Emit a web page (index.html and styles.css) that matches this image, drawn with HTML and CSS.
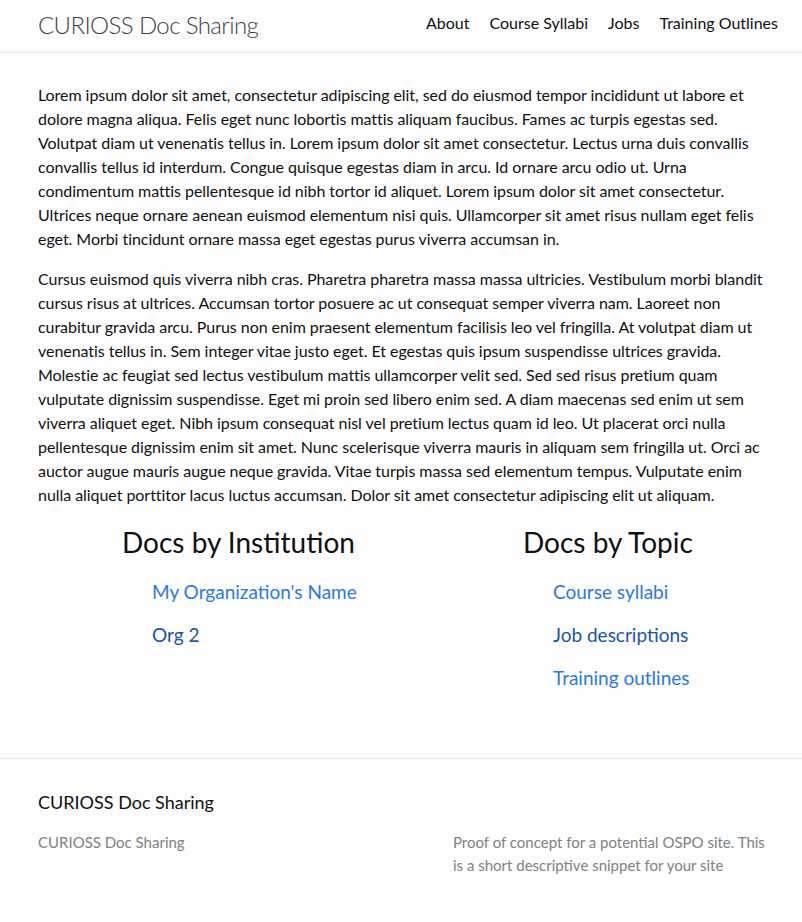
FILE: index.html
```html
<!DOCTYPE html>
<html lang="en">
<head>
<meta charset="utf-8">
<title>CURIOSS Doc Sharing</title>
<link rel="stylesheet" href="styles.css">
</head>
<body>
<header class="site-header">
  <div class="wrapper header-inner">
    <a class="site-title" href="#">CURIOSS Doc Sharing</a>
    <nav class="site-nav">
      <a class="nav-link" href="#">About</a>
      <a class="nav-link" href="#">Course Syllabi</a>
      <a class="nav-link" href="#">Jobs</a>
      <a class="nav-link" href="#">Training Outlines</a>
    </nav>
  </div>
</header>

<main class="page-content">
  <div class="wrapper">
    <p class="para">Lorem ipsum dolor sit amet, consectetur adipiscing elit, sed do eiusmod tempor incididunt ut labore et dolore magna aliqua. Felis eget nunc lobortis mattis aliquam faucibus. Fames ac turpis egestas sed. Volutpat diam ut venenatis tellus in. Lorem ipsum dolor sit amet consectetur. Lectus urna duis convallis convallis tellus id interdum. Congue quisque egestas diam in arcu. Id ornare arcu odio ut. Urna condimentum mattis pellentesque id nibh tortor id aliquet. Lorem ipsum dolor sit amet consectetur. Ultrices neque ornare aenean euismod elementum nisi quis. Ullamcorper sit amet risus nullam eget felis eget. Morbi tincidunt ornare massa eget egestas purus viverra accumsan in.</p>
    <p class="para">Cursus euismod quis viverra nibh cras. Pharetra pharetra massa massa ultricies. Vestibulum morbi blandit cursus risus at ultrices. Accumsan tortor posuere ac ut consequat semper viverra nam. Laoreet non curabitur gravida arcu. Purus non enim praesent elementum facilisis leo vel fringilla. At volutpat diam ut venenatis tellus in. Sem integer vitae justo eget. Et egestas quis ipsum suspendisse ultrices gravida. Molestie ac feugiat sed lectus vestibulum mattis ullamcorper velit sed. Sed sed risus pretium quam vulputate dignissim suspendisse. Eget mi proin sed libero enim sed. A diam maecenas sed enim ut sem viverra aliquet eget. Nibh ipsum consequat nisl vel pretium lectus quam id leo. Ut placerat orci nulla pellentesque dignissim enim sit amet. Nunc scelerisque viverra mauris in aliquam sem fringilla ut. Orci ac auctor augue mauris augue neque gravida. Vitae turpis massa sed elementum tempus. Vulputate enim nulla aliquet porttitor lacus luctus accumsan. Dolor sit amet consectetur adipiscing elit ut aliquam.</p>
  </div>

  <section class="docs">
    <div class="docs-col">
      <h2 class="docs-title">Docs by Institution</h2>
      <ul class="docs-list">
        <li class="docs-item"><a class="doc-link" href="#">My Organization's Name</a></li>
        <li class="docs-item"><a class="doc-link visited" href="#">Org 2</a></li>
      </ul>
    </div>
    <div class="docs-col">
      <h2 class="docs-title">Docs by Topic</h2>
      <ul class="docs-list">
        <li class="docs-item"><a class="doc-link" href="#">Course syllabi</a></li>
        <li class="docs-item"><a class="doc-link visited" href="#">Job descriptions</a></li>
        <li class="docs-item"><a class="doc-link" href="#">Training outlines</a></li>
      </ul>
    </div>
  </section>
</main>

<footer class="site-footer">
  <div class="wrapper">
    <h2 class="footer-heading">CURIOSS Doc Sharing</h2>
    <div class="footer-cols">
      <div class="footer-col">CURIOSS Doc Sharing</div>
      <div class="footer-col">Proof of concept for a potential OSPO site. This is a short descriptive snippet for your site</div>
    </div>
  </div>
</footer>
</body>
</html>
```
FILE: styles.css
```css
* { box-sizing: border-box; }

html, body {
  margin: 0;
  padding: 0;
  background: #fdfdfd;
}

body {
  font-family: "Lato", "Liberation Sans", sans-serif;
  font-size: 16px;
  line-height: 24px;
  color: #111111;
}

.wrapper {
  padding: 0 24px 0 38px;
}

/* Header */
.site-header {
  height: 53px;
  border-bottom: 1px solid #e8e8e8;
}

.header-inner {
  display: flex;
  justify-content: space-between;
  align-items: flex-start;
}

.site-title {
  font-size: 24px;
  font-weight: 300;
  letter-spacing: -0.6px;
  line-height: 50px;
  color: #424242;
  text-decoration: none;
}

.site-nav {
  display: flex;
  gap: 20px;
  padding-top: 11px;
}

.nav-link {
  font-size: 16px;
  line-height: 24px;
  color: #111111;
  text-decoration: none;
}

/* Content */
.page-content {
  padding: 30px 0 31px;
}

.para {
  margin: 0 0 16px;
  letter-spacing: -0.05px;
}

.docs {
  display: grid;
  grid-template-columns: 401px 1fr;
  padding-left: 122px;
  margin-top: 18px;
  margin-bottom: 28px;
}

.docs-title {
  margin: 0;
  font-size: 28px;
  font-weight: 400;
  line-height: 35px;
  color: #111111;
}

.docs-list {
  list-style: none;
  margin: 10px 0 0;
  padding: 0 0 0 30px;
}

.docs-item {
  font-size: 19px;
  line-height: 43px;
}

.doc-link {
  color: #2a7ae2;
  text-decoration: none;
}

.doc-link.visited {
  color: #1756a9;
}

/* Footer */
.site-footer {
  border-top: 1px solid #e8e8e8;
  padding: 30px 0 40px;
}

.footer-heading {
  margin: 0 0 15px;
  font-size: 18px;
  font-weight: 400;
  line-height: 27px;
  color: #111111;
}

.footer-cols {
  display: grid;
  grid-template-columns: 415px 1fr;
  font-size: 15px;
  line-height: 23px;
  color: #828282;
}
```
